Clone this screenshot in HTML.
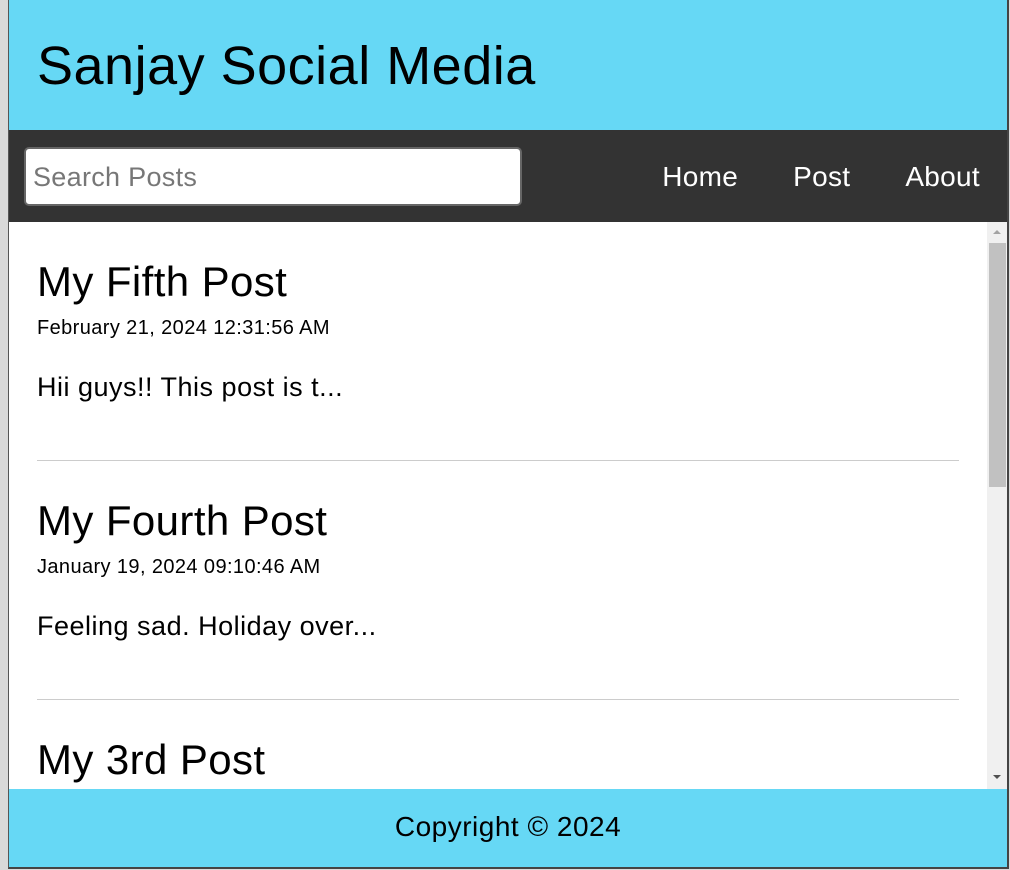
<!DOCTYPE html>
<html><head><meta charset="utf-8"><style>
*{margin:0;padding:0;box-sizing:border-box}
html,body{width:1010px;height:870px;overflow:hidden;background:#d9d9d9;font-family:"Liberation Sans",sans-serif}
.frame{position:absolute;left:8px;top:0;width:1001px;height:869px;border-left:1px solid #555;border-right:2px solid #444;border-bottom:2px solid #444;background:#fff;overflow:hidden}
.hdr{position:absolute;left:0;top:0;right:0;height:130px;background:#66d8f5}
.hdr h1{position:absolute;left:28px;top:35px;font-size:54px;font-weight:normal;letter-spacing:0.5px;color:#000;white-space:nowrap}
.nav{position:absolute;left:0;top:130px;right:0;height:92px;background:#333}
.search{position:absolute;left:15px;top:17px;width:498px;height:59px;background:#fff;border:2px solid #666;border-radius:5px;font-size:27px;letter-spacing:0.3px;color:#777;padding:13px 7px}
.links{position:absolute;right:27px;top:31px;color:#fff;font-size:28px;letter-spacing:0.3px;white-space:nowrap}
.links span{margin-left:55px}
.main{position:absolute;left:0;top:222px;width:978px;height:567px;overflow:hidden}
.post{position:absolute;left:28px;width:922px}
.post h2{font-size:42px;font-weight:normal;letter-spacing:0.4px;position:absolute;top:4px;white-space:nowrap}
.post .d{font-size:20px;letter-spacing:0.4px;position:absolute;top:63px;white-space:nowrap}
.post p{font-size:27px;letter-spacing:0.5px;position:absolute;top:118px;white-space:nowrap}
.hr{position:absolute;left:28px;width:922px;height:1px;background:#ccc}
.sb{position:absolute;left:978px;top:222px;width:20px;height:567px;background:#f0f0f0}
.thumb{position:absolute;left:2px;top:21px;width:17px;height:244px;background:#c1c1c1}
.ft{position:absolute;left:0;top:789px;right:0;height:78px;background:#66d8f5;text-align:center;font-size:28px;letter-spacing:0.5px;padding-top:22px}
</style></head><body>
<div class="frame">
<div class="hdr"><h1>Sanjay Social Media</h1></div>
<div class="nav"><div class="search">Search Posts</div><div class="links"><span>Home</span><span>Post</span><span>About</span></div></div>
<div class="main">
<div class="post" style="top:32px"><h2>My Fifth Post</h2><div class="d">February 21, 2024 12:31:56 AM</div><p>Hii guys!! This post is t...</p></div>
<div class="hr" style="top:238px"></div>
<div class="post" style="top:271px"><h2>My Fourth Post</h2><div class="d">January 19, 2024 09:10:46 AM</div><p>Feeling sad. Holiday over...</p></div>
<div class="hr" style="top:477px"></div>
<div class="post" style="top:510px"><h2>My 3rd Post</h2></div>
</div>
<div class="sb"><div class="thumb"></div>
<div style="position:absolute;left:6px;top:8px;border-left:4px solid transparent;border-right:4px solid transparent;border-bottom:4px solid #a3a3a3"></div>
<div style="position:absolute;left:6px;top:553px;border-left:4px solid transparent;border-right:4px solid transparent;border-top:4px solid #505050"></div>
</div>
<div class="ft">Copyright © 2024</div>
</div>
</body></html>
